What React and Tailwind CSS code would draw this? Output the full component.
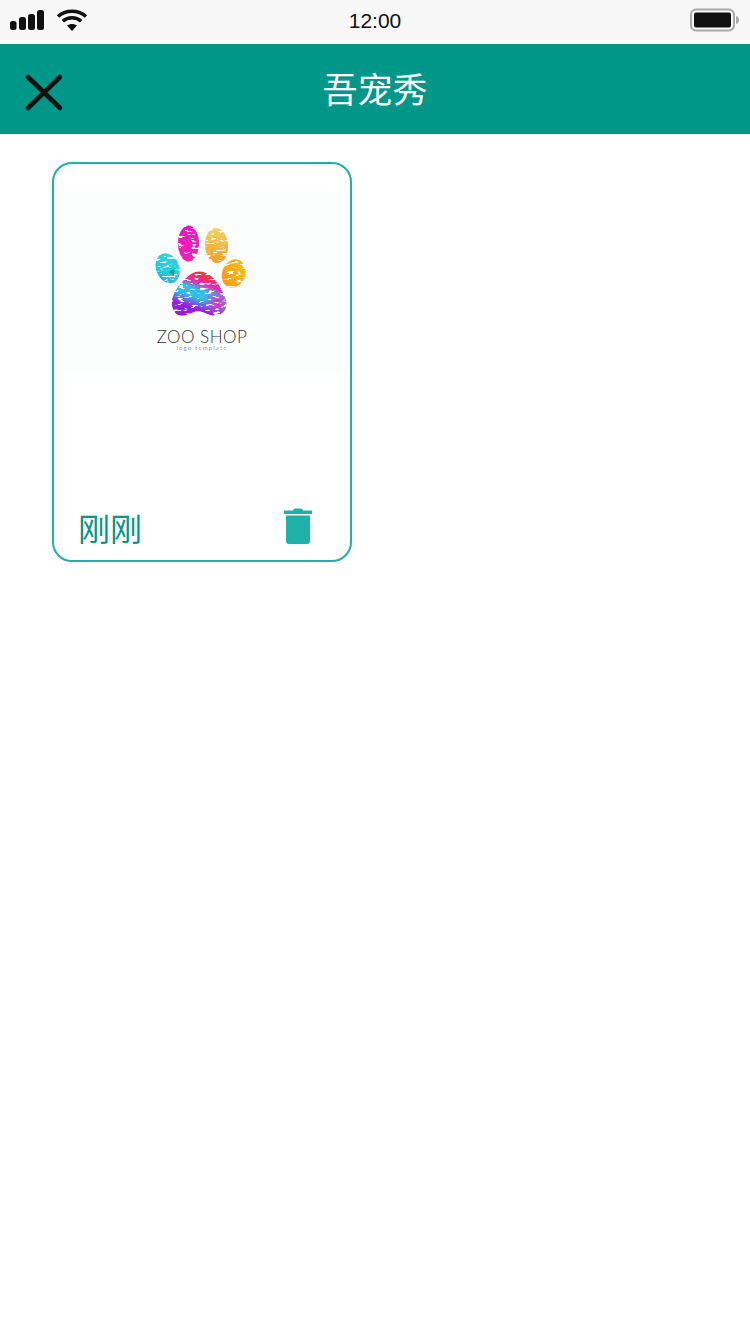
const CJK = "font-['Liberation_Sans','Noto_Sans_CJK_SC',sans-serif]";

// status bar glyphs
const SignalIcon = () => (
  <svg width="34" height="20" viewBox="0 0 34 20" fill="#111">
    <rect x="0" y="11" width="6.5" height="9" rx="2.5" />
    <rect x="9" y="7" width="7" height="13" rx="2.5" />
    <rect x="18" y="4" width="7" height="16" rx="2.5" />
    <rect x="27" y="0" width="7" height="20" rx="2.5" />
  </svg>
);

const WifiIcon = () => (
  <svg width="32" height="24" viewBox="0 0 32 24" fill="none" stroke="#111" strokeWidth="3.4">
    <path d="M2 8.500C9.500 1.500 22.500 1.500 30 8.500" />
    <path d="M6.800 13.200C12 8.600 20 8.600 25.200 13.200" />
    <path d="M16 23 11 17.600C13.800 15.400 18.200 15.400 21 17.600Z" fill="#111" stroke="none" />
  </svg>
);

const BatteryIcon = () => (
  <svg width="50" height="24" viewBox="0 0 50 24">
    <rect x="1" y="1.500" width="43" height="21" rx="5" fill="none" stroke="#aaa" strokeWidth="2" />
    <rect x="4" y="4.500" width="37" height="15" rx="2" fill="#111" />
    <path d="M46 8c2 .5 3 2 3 4s-1 3.500-3 4z" fill="#aaa" />
  </svg>
);

const CloseIcon = () => (
  <svg width="40" height="40" viewBox="0 0 40 40" stroke="#111" strokeWidth="4.6" strokeLinecap="round">
    <path d="M4 4 36 35M36 4 4 35" />
  </svg>
);

const TrashIcon = () => (
  <svg width="28" height="36" viewBox="0 0 28 36" fill="#1fb0a8">
    <path d="M0 2.500h9C9.500 1 10.500 .5 12 .5h4c1.500 0 2.500 .5 3 2h9v3.500H0z" />
    <path d="M2 7.500h24V33a3 3 0 0 1-3 3H5a3 3 0 0 1-3-3z" />
  </svg>
);

// the paw picture, coordinates are page pixels inside the image box
const PawLogo = () => (
  <svg width="100" height="98" viewBox="153 222 100 98">
    <defs>
      <linearGradient id="pad" x1="0.3" y1="1" x2="0.7" y2="0">
        <stop offset="0" stopColor="#a010e8" />
        <stop offset="0.22" stopColor="#9a20e0" />
        <stop offset="0.42" stopColor="#28c4e4" />
        <stop offset="0.56" stopColor="#40b8e0" />
        <stop offset="0.68" stopColor="#e828b8" />
        <stop offset="0.82" stopColor="#f83048" />
        <stop offset="1" stopColor="#f85a20" />
      </linearGradient>
      <linearGradient id="cy" x1="0" y1="1" x2="1" y2="0">
        <stop offset="0" stopColor="#4a7ae0" />
        <stop offset="0.35" stopColor="#25cbdc" />
        <stop offset="1" stopColor="#30d8e0" />
      </linearGradient>
      <linearGradient id="mg" x1="0" y1="0" x2="1" y2="1">
        <stop offset="0" stopColor="#e810d8" />
        <stop offset="0.7" stopColor="#f020b0" />
        <stop offset="1" stopColor="#f06050" />
      </linearGradient>
      <linearGradient id="og" x1="0" y1="0" x2="0" y2="1">
        <stop offset="0" stopColor="#f5d060" />
        <stop offset="1" stopColor="#f0a028" />
      </linearGradient>
      <linearGradient id="yl" x1="1" y1="0" x2="0" y2="1">
        <stop offset="0" stopColor="#fcc810" />
        <stop offset="1" stopColor="#f59020" />
      </linearGradient>
      <radialGradient id="pink">
        <stop offset="0" stopColor="#f020c0" />
        <stop offset="1" stopColor="#f020c0" stopOpacity="0" />
      </radialGradient>
      <clipPath id="padClip">
        <path d="M173 300C175 289 184 280 192 274C199 270 206 271 212 276C219 282 227 295 227.500 304C227.500 312 221 316 214 315.500C208 315 204 311 199 311C193 312 189 316 182 315.500C176 315 172 309 173 300Z" />
      </clipPath>
      {/* scratchy holes in the paint */}
      <filter id="grunge" x="0" y="0" width="100%" height="100%">
        <feTurbulence type="fractalNoise" baseFrequency="0.14 0.42" numOctaves="2" seed="7" result="noise" />
        <feColorMatrix
          in="noise"
          type="matrix"
          values="0 0 0 0 0  0 0 0 0 0  0 0 0 0 0  0 0 0 -12 4.9"
          result="holes"
        />
        <feComposite in="SourceGraphic" in2="holes" operator="out" />
        <feGaussianBlur stdDeviation="0.35" />
      </filter>
    </defs>
    <g filter="url(#grunge)">
      <ellipse cx="189.500" cy="243.500" rx="10.500" ry="18" fill="url(#mg)" />
      <ellipse cx="217.500" cy="245.500" rx="11.500" ry="17.500" fill="url(#og)" transform="rotate(-4 217 245)" />
      <ellipse cx="168.500" cy="268.500" rx="11.500" ry="15.500" fill="url(#cy)" transform="rotate(-22 168 268)" />
      <ellipse cx="235" cy="273.500" rx="11.500" ry="14.500" fill="url(#yl)" transform="rotate(24 235 273)" />
      <g clipPath="url(#padClip)">
        <rect x="170" y="268" width="60" height="50" fill="url(#pad)" />
        <ellipse cx="219" cy="303" rx="15" ry="13" fill="url(#pink)" />
      </g>
      <path d="M170 272 176 268 175 276Z" fill="#1a8f98" opacity="0.8" />
    </g>
  </svg>
);

export default function App() {
  return (
    <div className={`min-h-[1334px] bg-white ${CJK}`}>
      {/* Status bar */}
      <div className="grid h-10 grid-cols-3 items-center bg-[#f7f7f7] pl-[10px] pr-[10px]">
        <div className="flex items-center gap-3">
          <SignalIcon />
          <WifiIcon />
        </div>
        <div className="text-center text-[21px] leading-none text-[#111]">12:00</div>
        <div className="flex justify-end">
          <BatteryIcon />
        </div>
      </div>

      {/* Header */}
      <div className="mt-1 grid h-[90px] grid-cols-3 items-center bg-[#009688] pl-6 pr-6 pt-[2px]">
        <div className="mt-[6px]">
          <CloseIcon />
        </div>
        <div className="whitespace-nowrap text-center text-[35px] leading-none text-white">吾宠秀</div>
      </div>

      {/* Photo list */}
      <div className="pl-[52px] pt-7">
        <div className="flex h-[400px] w-[300px] flex-col rounded-[20px] border-2 border-[#1fb0a8] pl-2 pr-2 pt-[26px]">
          <div className="flex h-[182px] w-[280px] flex-col items-center bg-[#fcfdfd] pt-8">
            <PawLogo />
            <div className="mt-[8px] font-['Lato',sans-serif] text-[17px] font-light leading-none tracking-[0.5px] text-[#333]">
              ZOO SHOP
            </div>
            <div className="font-['Lato',sans-serif] text-[6px] font-light leading-none tracking-[1.200px] text-[#333]">
              logo template
            </div>
          </div>
          <div className="mt-auto flex items-end justify-between pb-[14px] pl-[16px] pr-[30px]">
            <span className="text-[32px] leading-none text-[#009688]">刚刚</span>
            <div className="mb-[2px] flex">
              <TrashIcon />
            </div>
          </div>
        </div>
      </div>
    </div>
  );
}
